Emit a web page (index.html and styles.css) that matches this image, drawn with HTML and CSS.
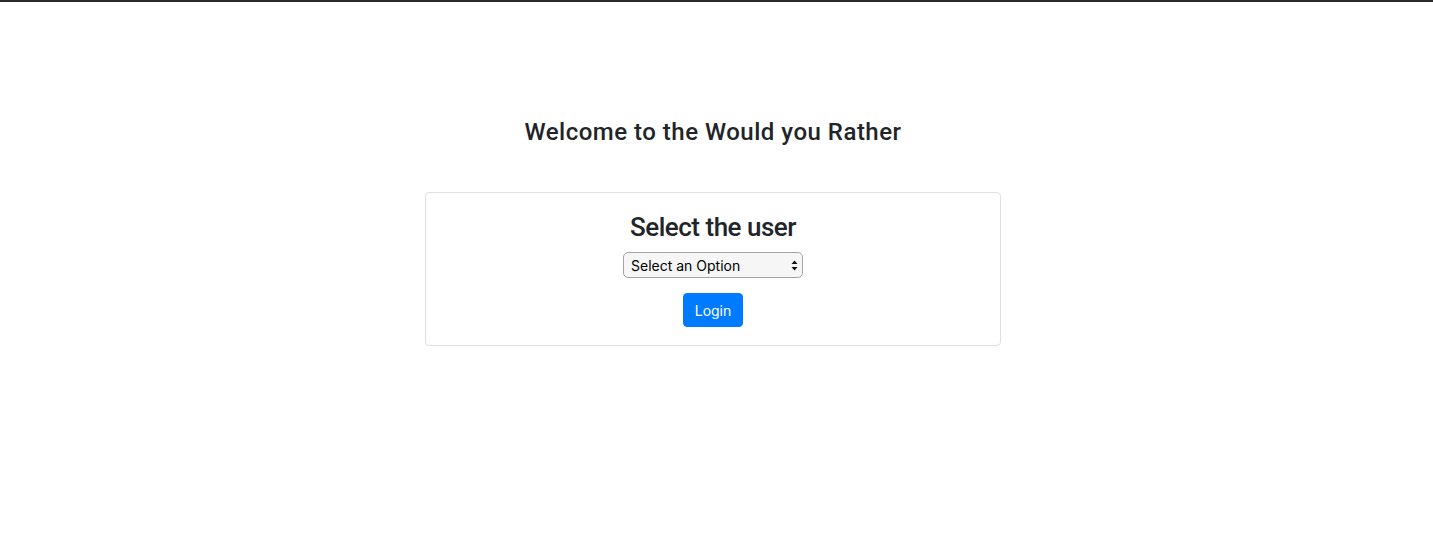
FILE: index.html
```html
<!DOCTYPE html>
<html lang="en">
<head>
<meta charset="utf-8">
<title>Would you Rather</title>
<link rel="stylesheet" href="styles.css">
</head>
<body>
<div class="topbar"></div>
<main class="page">
  <h1 class="welcome">Welcome to the Would you Rather</h1>
  <section class="card">
    <h2 class="card-title">Select the user</h2>
    <div class="select">
      <span class="select-label">Select an Option</span>
      <svg class="select-arrows" width="7" height="11" viewBox="0 0 7 11"><path d="M3.5 0.5 L6.5 4 L0.5 4 Z" fill="#111"/><path d="M3.5 10.5 L6.5 7 L0.5 7 Z" fill="#111"/></svg>
    </div>
    <button class="btn">Login</button>
  </section>
</main>
</body>
</html>
```
FILE: styles.css
```css
html, body {
  margin: 0;
  padding: 0;
  background: #fff;
}
body {
  font-family: Roboto, "Liberation Sans", sans-serif;
  color: #212529;
}
.topbar {
  height: 2px;
  background: #2b2b2e;
}
.page {
  display: flex;
  flex-direction: column;
  align-items: center;
  padding: 116px 7px 0 0;
}
.welcome {
  margin: 0;
  font-size: 24px;
  font-weight: 500;
  line-height: 29px;
  letter-spacing: 0.5px;
}
.card {
  margin-top: 45px;
  width: 574px;
  border: 1px solid rgba(0,0,0,.125);
  border-radius: 4px;
  display: flex;
  flex-direction: column;
  align-items: center;
  padding: 18px 0 18px;
}
.card-title {
  margin: 0 0 9px;
  font-size: 26px;
  font-weight: 500;
  line-height: 32px;
  letter-spacing: -0.5px;
}
.select {
  box-sizing: border-box;
  width: 180px;
  height: 26px;
  border: 1px solid #a5a5a5;
  border-radius: 5px;
  background: #f6f6f6;
  display: flex;
  align-items: center;
  justify-content: space-between;
  padding: 0 4px 0 7px;
  font-family: Inter, "Liberation Sans", sans-serif;
  font-size: 14px;
  color: #000;
}
.btn {
  margin-top: 15px;
  box-sizing: border-box;
  width: 60px;
  height: 34px;
  border: 1px solid #007bff;
  border-radius: 4px;
  background: #007bff;
  color: #fff;
  font-family: Inter, "Liberation Sans", sans-serif;
  font-size: 14px;
  padding: 0;
}
```
